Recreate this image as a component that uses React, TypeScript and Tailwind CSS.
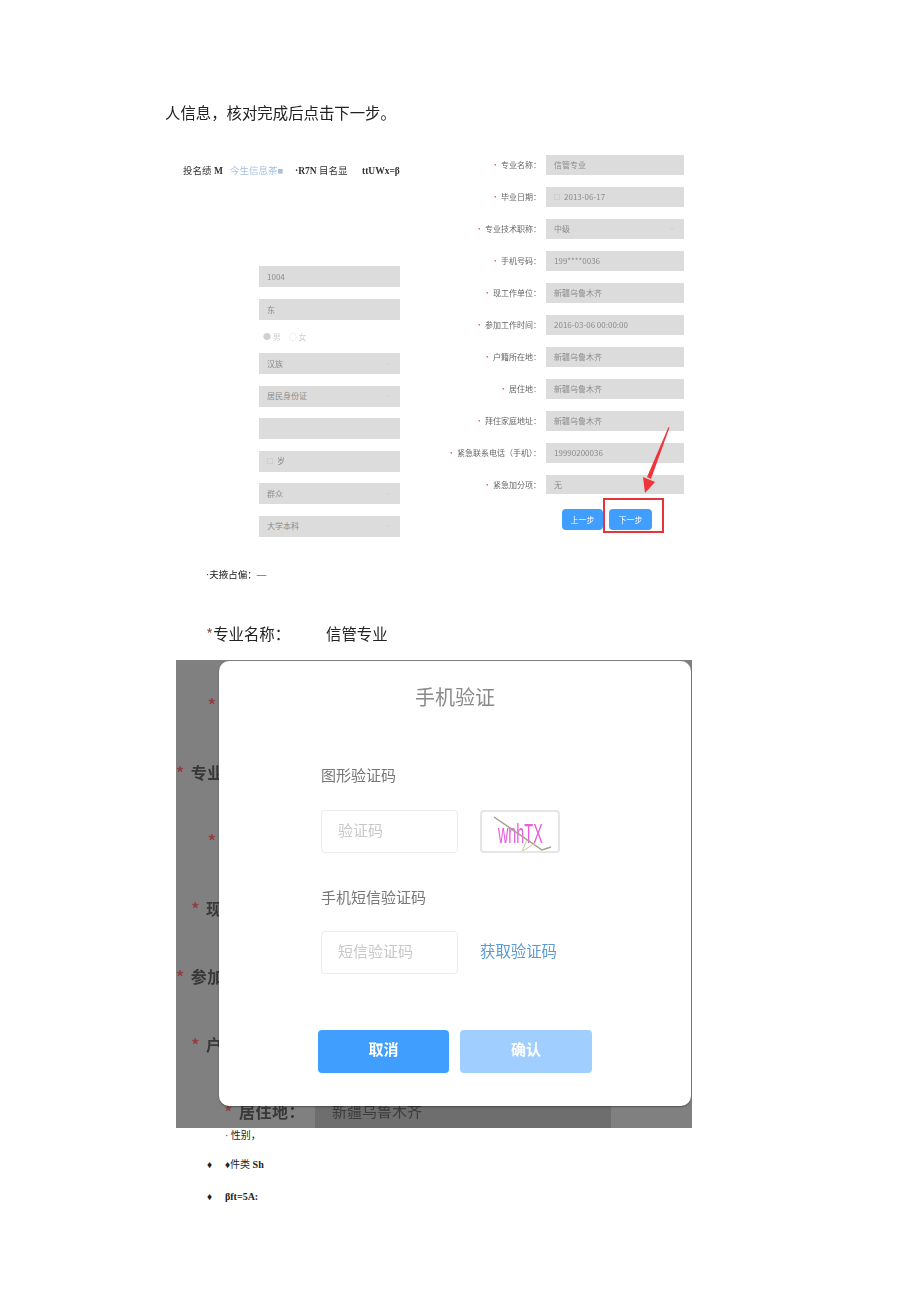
import React from "react";
import { ChevronDown } from "lucide-react";

const LEFT_FIELDS = [
  { text: "汉族", select: true },
  { text: "居民身份证", select: true },
  { text: "", select: false },
  { text: "岁", select: false, date: true },
  { text: "群众", select: true },
  { text: "大学本科", select: true },
];

const RIGHT_FIELDS = [
  { label: "专业名称：", value: "信管专业" },
  { label: "毕业日期：", value: "2013-06-17", date: true },
  { label: "专业技术职称：", value: "中级", select: true },
  { label: "手机号码：", value: "199****0036" },
  { label: "现工作单位：", value: "新疆乌鲁木齐" },
  { label: "参加工作时间：", value: "2016-03-06 00:00:00" },
  { label: "户籍所在地：", value: "新疆乌鲁木齐" },
  { label: "居住地：", value: "新疆乌鲁木齐" },
  { label: "拜住家庭地址：", value: "新疆乌鲁木齐" },
  { label: "紧急联系电话（手机）：", value: "19990200036" },
];

const BEHIND_MODAL = ["毕业日期：", "专业技术职称：", "手机号码：", "现工作单位：", "参加工作时间：", "户籍所在地："];

function GrayField({ text, select, date, wide }: { text: string; select?: boolean; date?: boolean; wide?: boolean }) {
  return (
    <div className={`flex items-center justify-between bg-[#dcdcdc] text-[8px] text-[#8c8c8c] ${wide ? "h-[21px] w-[141px] pl-2 pr-2" : "h-5 w-[138px] pl-2 pr-2"}`}>
      <span className="flex items-center gap-1">
        {date && <span className="h-[6px] w-[6px] border border-[#cfcfcf]" />}
        {text}
      </span>
      {select && <ChevronDown size={8} className="text-[#cccccc]" />}
    </div>
  );
}

function Captcha() {
  return (
    <div className="relative flex h-[43px] w-20 items-center justify-center overflow-hidden rounded border-2 border-[#e6e6e6] bg-white">
      <span className="mt-[5px] inline-block origin-center scale-x-[0.6] scale-y-[1.15] text-[24px] leading-none text-[#e85ce0] [font-family:'Liberation_Sans',sans-serif]">
        wnhTX
      </span>
      <svg className="absolute inset-0" width="76" height="39" viewBox="0 0 76 39" fill="none">
        <path d="M12 5 L60 38 L69 35" stroke="#a8a08c" strokeWidth="1.5" />
        <path d="M40 39 L45 28" stroke="#b8d0a0" strokeWidth="1" />
        <path d="M41 39 L53 31" stroke="#d8c0a0" strokeWidth="1" />
      </svg>
    </div>
  );
}

function Modal() {
  return (
    <div className="absolute left-[43px] top-px flex h-[445px] w-[472px] flex-col rounded-[10px] bg-white pl-[102px] text-[#777777] shadow-[0_1px_2px_rgba(0,0,0,0.35)]">
      <h2 className="-ml-[102px] mt-[24px] text-center text-[20px] leading-[24px] text-[#8a8a8a]">手机验证</h2>
      <div className="mt-[55px] text-[15px] leading-[22px]">图形验证码</div>
      <div className="mt-[24px] flex items-center gap-[22px]">
        <div className="flex h-[43px] w-[137px] items-center rounded border-[1.5px] border-[#ececec] pb-[3px] pl-4 text-[15px] text-[#c8c8c8]">验证码</div>
        <Captcha />
      </div>
      <div className="mt-[33px] text-[15px] leading-[22px]">手机短信验证码</div>
      <div className="mt-[23px] flex items-center gap-[22px]">
        <div className="flex h-[43px] w-[137px] items-center rounded border-[1.5px] border-[#ececec] pb-[3px] pl-4 text-[15px] text-[#c8c8c8]">短信验证码</div>
        <span className="pb-[3px] text-[15.4px] text-[#5b9bd5]">获取验证码</span>
      </div>
      <div className="-ml-[3px] mt-[56px] flex gap-[11px]">
        <button className="h-[43px] w-[131px] rounded bg-[#409eff] pb-1 text-[15px] font-bold text-white">取消</button>
        <button className="h-[43px] w-[132px] rounded bg-[#a0cfff] pb-1 text-[15px] font-bold text-white">确认</button>
      </div>
    </div>
  );
}

export default function App() {
  return (
    <div className="h-[1301px] w-[920px] overflow-hidden bg-white pt-[102px] text-black [font-family:'Noto_Sans_CJK_SC','Liberation_Serif',sans-serif]">
      <p className="ml-[165px] text-[15.4px] leading-[20px] text-[#222222] blur-[0.3px]">人信息，核对完成后点击下一步。</p>

      <div className="relative mt-[33px] flex h-[390px] blur-[0.45px]">
        <div className="w-[445px]">
          <div className="ml-[183px] flex pt-[10px] text-[9.5px] leading-[12px] text-[#333333] [font-family:'Liberation_Serif','Noto_Sans_CJK_SC',serif]">
            <span className="w-[47px]">投名绩 <b>M</b></span>
            <span className="w-[65px] text-[#a9c0dc]">今生信息茶■</span>
            <span className="w-[67px]"><b>·R7N</b> 目名显</span>
            <b>ttUWx=β</b>
          </div>
          <div className="ml-[259px] mt-[89px] flex flex-col">
            <GrayField text="1004" wide />
            <div className="mt-3">
              <GrayField text="东" wide />
            </div>
            <div className="flex h-[33px] items-center gap-2 pl-1 text-[8px] text-[#d0d0d0]">
              <span>● 男</span>
              <span>○ 女</span>
            </div>
            <div className="flex flex-col gap-[11.6px]">
              {LEFT_FIELDS.map((f, i) => (
                <GrayField key={i} text={f.text} select={f.select} date={f.date} wide />
              ))}
            </div>
          </div>
        </div>

        <div className="relative flex-1">
          <div className="flex flex-col gap-3">
            {RIGHT_FIELDS.map((f) => (
              <div key={f.label} className="flex items-center gap-[5px]">
                <div className="w-[96px] whitespace-nowrap text-right text-[8px] text-[#666666]">
                  <span className="text-[#e8506e]">• </span>
                  {f.label}
                </div>
                <GrayField text={f.value} select={f.select} date={f.date} />
              </div>
            ))}
            <div className="flex items-center gap-[5px]">
              <div className="w-[96px] whitespace-nowrap text-right text-[8px] text-[#666666]">
                <span className="text-[#e8506e]">• </span>
                紧急加分项：
              </div>
              <div className="flex h-[19px] w-[138px] items-center bg-[#dcdcdc] pl-2 text-[8px] text-[#8c8c8c]">无</div>
            </div>
          </div>
          <div className="ml-[117px] mt-[15px] flex gap-[6px]">
            <button className="h-[21px] w-[41px] rounded-sm bg-[#409eff] text-[8px] text-white">上一步</button>
            <button className="h-[21px] w-[43px] rounded-sm bg-[#409eff] text-[8px] text-white">下一步</button>
          </div>
          <div className="absolute left-[158px] top-[343px] h-[35px] w-[61px] border-2 border-[#e5343a]" />
          <svg className="absolute left-[190px] top-[268px]" width="44" height="74" viewBox="0 0 44 74" fill="none">
            <path d="M33.5 4 L34.5 4.5 L16 56 L12 54 Z" fill="#f0343a" />
            <path d="M10 70 L8 54 L20 59 Z" fill="#f0343a" />
          </svg>
        </div>
      </div>

      <p className="ml-[206px] mt-[23px] text-[9.5px] leading-[14px] text-[#222222] blur-[0.2px] [font-family:'Liberation_Serif','Noto_Sans_CJK_SC',serif]">·夫掖占偏：—</p>

      <div className="ml-[206px] mt-[39px] flex text-[15.4px] leading-[24px] text-[#222222] blur-[0.25px]">
        <span className="w-[120px]">
          <span className="text-[#8a5a50]">*</span>专业名称：
        </span>
        <span>信管专业</span>
      </div>

      <div className="relative ml-[176px] mt-[15px] h-[468px] w-[516px] overflow-hidden bg-[#808080] blur-[0.4px]">
        <div className="flex flex-col gap-[46px] pt-[33px]">
          {BEHIND_MODAL.map((label) => (
            <div key={label} className="w-[129px] whitespace-nowrap text-right text-[16px] font-bold leading-[22px] tracking-[0.5px] text-[#383838]">
              <span className="mr-[2px] text-[#8f3f3f]">* </span>
              {label}
            </div>
          ))}
        </div>
        <div className="absolute bottom-0 left-0 flex h-[34px] items-center">
          <div className="w-[129px] whitespace-nowrap text-right text-[16px] font-bold leading-[22px] tracking-[0.5px] text-[#383838]">
            <span className="mr-[2px] text-[#8f3f3f]">* </span>
            居住地：
          </div>
          <div className="ml-[10px] flex h-[34px] w-[296px] items-center bg-[#6e6e6e] pl-[17px] text-[15px] text-[#3c3c3c]">新疆乌鲁木齐</div>
        </div>
        <Modal />
      </div>

      <div className="ml-[207px] flex flex-col text-[10px] font-bold leading-[14px] text-[#222222] [font-family:'Liberation_Serif','Noto_Sans_CJK_SC',serif]">
        <div className="mt-[1px] pl-[18px] font-normal">· 性别，</div>
        <div className="mt-[15px] flex">
          <span className="w-[18px]">♦</span>
          <span className="font-normal">♦件类 <b>Sh</b></span>
        </div>
        <div className="mt-[18px] flex">
          <span className="w-[18px]">♦</span>
          <span>βft=5A:</span>
        </div>
      </div>
    </div>
  );
}
